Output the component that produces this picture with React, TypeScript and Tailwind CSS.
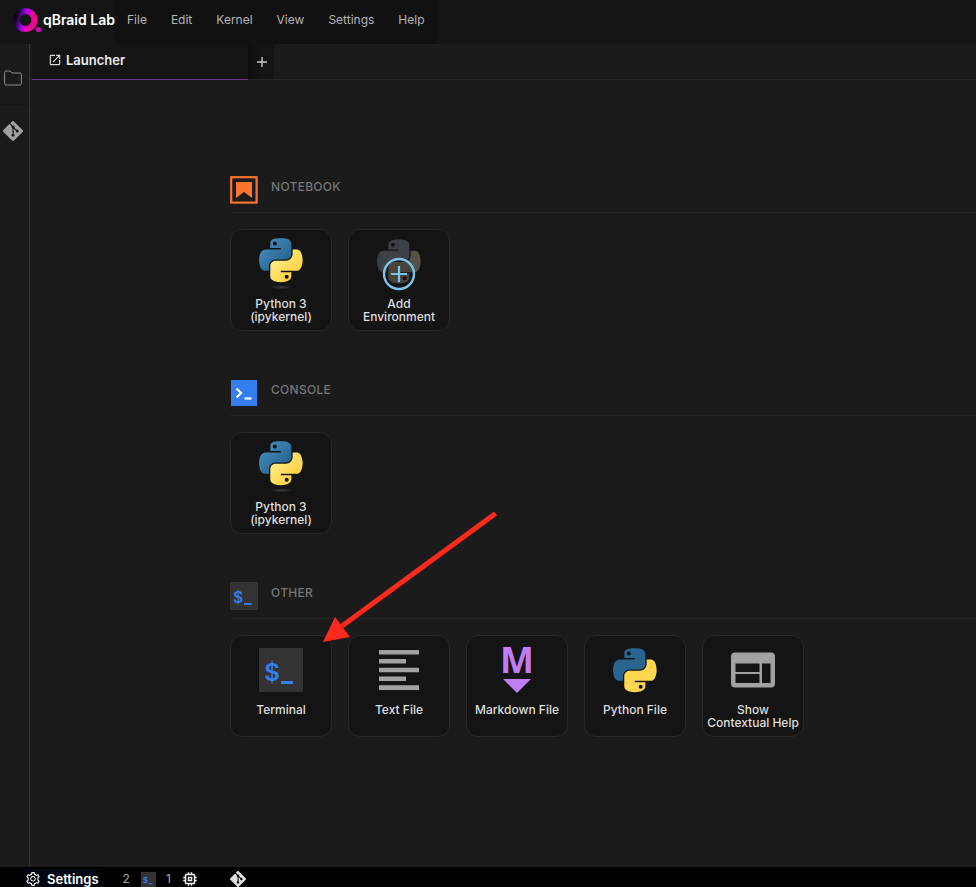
import type { ReactNode } from "react";
import { AiOutlineSetting } from "react-icons/ai";
import { MdMemory, MdOpenInNew } from "react-icons/md";
import { SiGit } from "react-icons/si";

const BLUE_SNAKE =
  "M54.92 0C50.34.02 45.96.41 42.11 1.09 30.76 3.1 28.7 7.29 28.7 15.03v10.22h26.81v3.41H18.64c-7.79 0-14.62 4.68-16.75 13.59-2.46 10.21-2.57 16.59 0 27.25 1.91 7.94 6.46 13.59 14.25 13.59h9.22v-12.25c0-8.85 7.66-16.66 16.75-16.66h26.78c7.45 0 13.41-6.14 13.41-13.62V15.03c0-7.27-6.13-12.72-13.41-13.94C64.28.33 59.5-.02 54.92 0Zm-14.5 8.22c2.77 0 5.03 2.3 5.03 5.12 0 2.82-2.26 5.1-5.03 5.1-2.78 0-5.03-2.28-5.03-5.1 0-2.82 2.25-5.12 5.03-5.12Z";
const YELLOW_SNAKE =
  "M85.64 28.66v11.9c0 9.23-7.83 17-16.75 17H42.11c-7.34 0-13.41 6.28-13.41 13.63v25.53c0 7.26 6.32 11.54 13.41 13.62 8.49 2.5 16.62 2.95 26.78 0 6.75-1.95 13.41-5.88 13.41-13.62V86.5H55.51v-3.41H95.7c7.79 0 10.7-5.43 13.41-13.59 2.8-8.4 2.68-16.48 0-27.25-1.93-7.76-5.6-13.59-13.41-13.59H85.64Zm-15.06 64.65c2.78 0 5.03 2.28 5.03 5.1 0 2.82-2.25 5.12-5.03 5.12-2.77 0-5.03-2.3-5.03-5.12 0-2.82 2.26-5.1 5.03-5.1Z";

function PythonLogo({ id, flat = false }: { id: string; flat?: boolean }) {
  return (
    <svg viewBox="0 0 112 134" className="h-[53px] w-11" aria-hidden="true">
      <defs>
        <linearGradient id={`${id}-b`} x1="0" y1="0" x2="0.8" y2="0.8">
          <stop offset="0" stopColor="#4b93c8" />
          <stop offset="1" stopColor="#26638f" />
        </linearGradient>
        <linearGradient id={`${id}-y`} x1="0.2" y1="0.2" x2="0.8" y2="0.8">
          <stop offset="0" stopColor="#ffec83" />
          <stop offset="1" stopColor="#ffd03f" />
        </linearGradient>
        <radialGradient id={`${id}-s`}>
          <stop offset="0" stopColor="#3c3c3c" />
          <stop offset="1" stopColor="#141414" />
        </radialGradient>
      </defs>
      <path d={BLUE_SNAKE} fill={flat ? "#28658f" : `url(#${id}-b)`} />
      <path d={YELLOW_SNAKE} fill={flat ? "#ffd64f" : `url(#${id}-y)`} />
      {!flat && <ellipse cx="56" cy="125" rx="29" ry="5" fill={`url(#${id}-s)`} />}
    </svg>
  );
}

function AddEnvironmentIcon() {
  return (
    <svg viewBox="0 0 44 54" className="h-[54px] w-11" aria-hidden="true">
      <g transform="translate(0 1.500) scale(.393)">
        <path d={BLUE_SNAKE} fill="#3d4146" />
        <path d={YELLOW_SNAKE} fill="#565147" />
      </g>
      <circle cx="22" cy="36" r="15" fill="#141414" fillOpacity=".2" stroke="#7cc4ec" strokeWidth="2.4" />
      <path d="M22 28v16M14 36h16" stroke="#7cc4ec" strokeWidth="2.2" />
    </svg>
  );
}

function NotebookIcon() {
  return (
    <svg viewBox="0 0 28 28" className="size-7" aria-hidden="true">
      <rect x="1.2" y="1.2" width="25.4" height="25.4" fill="none" stroke="#f9742d" strokeWidth="2.2" />
      <path d="M6 6h16v16l-8-6-8 6Z" fill="#f9742d" />
    </svg>
  );
}

function ConsoleIcon() {
  return (
    <svg viewBox="0 0 28 28" className="size-7" aria-hidden="true">
      <rect x="1" y="1" width="26" height="26" fill="#347ef1" />
      <path d="m6.500 9.500 4.500 4.500-4.500 4.500" fill="none" stroke="#fff" strokeWidth="2.2" />
      <path d="M14.500 19.500h7" stroke="#fff" strokeWidth="2.2" />
    </svg>
  );
}

function TerminalIcon({ className }: { className: string }) {
  return (
    <svg viewBox="0 0 44 44" className={className} aria-hidden="true">
      <rect width="44" height="44" fill="#333" />
      <text x="13" y="33" textAnchor="middle" fontFamily="Inter, sans-serif" fontWeight="600" fontSize="24" fill="#347ef1">
        $
      </text>
      <rect x="22" y="33" width="12" height="3" fill="#347ef1" />
    </svg>
  );
}

function TextFileIcon() {
  return (
    <svg viewBox="0 0 44 44" className="size-11" fill="#a2a2a2" aria-hidden="true">
      <path d="M2 2h40v4.600H2zM2 11h27v4.600H2zM2 19.700h40v4.600H2zM2 28.500h27v4.600H2zM2 37.300h40v4.600H2z" />
    </svg>
  );
}

function MarkdownIcon() {
  return (
    <svg viewBox="0 0 44 48" className="h-12 w-11 overflow-visible" fill="#c17df5" aria-hidden="true">
      <text x="22" y="27" textAnchor="middle" fontFamily="Open Sans, sans-serif" fontWeight="700" fontSize="36">
        M
      </text>
      <path d="M8 33h28L22 47Z" />
    </svg>
  );
}

function HelpIcon() {
  return (
    <svg viewBox="0 0 44 44" className="size-11" aria-hidden="true">
      <path
        fill="#a2a2a2"
        fillRule="evenodd"
        d="M4 4.500h36a4 4 0 0 1 4 4v27a4 4 0 0 1-4 4H4a4 4 0 0 1-4-4v-27a4 4 0 0 1 4-4ZM4.500 15.500v8.500h24v-8.500Zm0 10.500v9h24v-9Zm26.500-10.500v19.500h8.500v-19.500Z"
      />
    </svg>
  );
}

function BrandLogo() {
  return (
    <svg viewBox="0 0 30 28" className="h-7 w-[30px]" aria-hidden="true">
      <defs>
        <linearGradient id="ring" x1="0" y1="0.3" x2="1" y2="0.6">
          <stop offset="0" stopColor="#17001f" />
          <stop offset="0.2" stopColor="#4a0a86" />
          <stop offset="0.45" stopColor="#b300f0" />
          <stop offset="0.8" stopColor="#f0058f" />
        </linearGradient>
      </defs>
      <circle cx="13.500" cy="14" r="9" fill="none" stroke="url(#ring)" strokeWidth="6" />
      <circle cx="26.500" cy="23.500" r="2.600" fill="#cf0bbd" />
    </svg>
  );
}

function FolderIcon() {
  return (
    <svg viewBox="0 0 18 16" className="h-4 w-[18px]" fill="none" stroke="#8f8f8f" aria-hidden="true">
      <path d="M.6 2.500q0-1.500 1.500-1.500h4l2 2h7.800q1.500 0 1.500 1.500v9q0 1.500-1.500 1.500H2.100Q.6 15 .6 13.500Z" />
    </svg>
  );
}

function Card({ icon, label }: { icon: ReactNode; label: string }) {
  return (
    <button
      type="button"
      className="flex size-[102px] flex-col items-center rounded-xl border border-[#282828] bg-[#141414] pt-2 text-xs leading-[13px] font-medium text-[#dedede]"
    >
      <span className="flex h-[59px] items-start justify-center">{icon}</span>
      <span className="whitespace-pre-line">{label}</span>
    </button>
  );
}

function Section({ title, icon, children }: { title: string; icon: ReactNode; children: ReactNode }) {
  return (
    <section className="mb-12">
      <h2 className="mb-4 flex h-[37px] items-start gap-[13px] border-b border-[#242424] text-xs font-medium tracking-wide text-[#777]">
        {icon}
        <span className="pt-[3px]">{title}</span>
      </h2>
      <div className="flex flex-wrap gap-4">{children}</div>
    </section>
  );
}

export default function App() {
  return (
    <div className="flex min-h-screen flex-col bg-[#1b1b1b] font-['Inter',sans-serif]">
      <header className="flex h-11 bg-[#141414]">
        <div className="flex h-10 w-[115px] items-center gap-px pl-3 text-sm font-semibold whitespace-nowrap text-white">
          <BrandLogo />
          qBraid Lab
        </div>
        <nav className="flex h-11 items-start gap-6 bg-[#111] px-3 pt-3 text-xs leading-4 text-[#b5b5b5]">
          {["File", "Edit", "Kernel", "View", "Settings", "Help"].map((item) => (
            <button key={item} type="button">
              {item}
            </button>
          ))}
        </nav>
      </header>

      <div className="flex flex-1">
        <aside className="flex w-[30px] flex-col border-r border-[#343434]">
          <button type="button" aria-label="Files" className="flex h-[61px] items-center border-b border-[#171717] pt-2 pl-1">
            <FolderIcon />
          </button>
          <button type="button" aria-label="Git" className="flex h-[52px] items-center pl-[3px]">
            <SiGit size={20} color="#a2a2a2" />
          </button>
        </aside>

        <div className="flex min-w-0 flex-1 flex-col">
          <div className="flex h-9 border-b border-[#262626] pl-0.5">
            <button
              type="button"
              className="flex h-9 w-[216px] items-start gap-1 border-b border-[#6b3896] bg-[#141414] pt-2 pl-4 text-[13px] leading-4 font-semibold text-[#ececec]"
            >
              <MdOpenInNew size={14} color="#dcdcdc" className="mt-px" />
              Launcher
            </button>
            <button
              type="button"
              aria-label="New launcher"
              className="flex w-[26px] items-center justify-center bg-linear-to-r from-[#0e0e0e] to-[#141414] to-50%"
            >
              <svg viewBox="0 0 10 10" className="mt-px ml-0.5 size-2.5" stroke="#c8c8c8" strokeWidth="1.4" aria-hidden="true">
                <path d="M5 0v10M0 5h10" />
              </svg>
            </button>
          </div>

          <main className="relative flex-1 pt-24 pl-[200px]">
            <Section title="NOTEBOOK" icon={<NotebookIcon />}>
              <Card icon={<PythonLogo id="nb" />} label={"Python 3\n(ipykernel)"} />
              <Card icon={<AddEnvironmentIcon />} label={"Add\nEnvironment"} />
            </Section>
            <Section title="CONSOLE" icon={<ConsoleIcon />}>
              <Card icon={<PythonLogo id="co" />} label={"Python 3\n(ipykernel)"} />
            </Section>
            <Section title="OTHER" icon={<TerminalIcon className="size-7" />}>
              <Card icon={<TerminalIcon className="mt-1 size-11" />} label="Terminal" />
              <Card icon={<span className="mt-1"><TextFileIcon /></span>} label="Text File" />
              <Card icon={<span className="mt-0.5"><MarkdownIcon /></span>} label="Markdown File" />
              <Card icon={<span className="mt-1"><PythonLogo id="py" flat /></span>} label="Python File" />
              <Card icon={<span className="mt-1"><HelpIcon /></span>} label={"Show\nContextual Help"} />
            </Section>

            <svg
              viewBox="0 0 176 132"
              className="pointer-events-none absolute top-[431px] left-[293px] h-[132px] w-44"
              fill="#ff2a1b"
              aria-hidden="true"
            >
              <path d="M172.500 2.500 19 115" stroke="#ff2a1b" strokeWidth="5" />
              <path d="M0 131 12 106 27 126Z" />
            </svg>
          </main>
        </div>
      </div>

      <footer className="flex h-5 items-center bg-black pt-1 pl-[25px] text-xs text-[#a8a8a8]">
        <button
          type="button"
          className="flex h-5 items-center gap-1.5 bg-[#030712] text-[13px] leading-5 font-semibold text-white"
        >
          <AiOutlineSetting size={16} />
          Settings
        </button>
        <span className="ml-6">2</span>
        <TerminalIcon className="ml-[11px] size-[15px]" />
        <span className="ml-2.5">1</span>
        <MdMemory size={18} color="#f2f2f2" className="ml-2.5" />
        <SiGit size={16} color="#dedede" className="ml-[31px]" />
      </footer>
    </div>
  );
}
